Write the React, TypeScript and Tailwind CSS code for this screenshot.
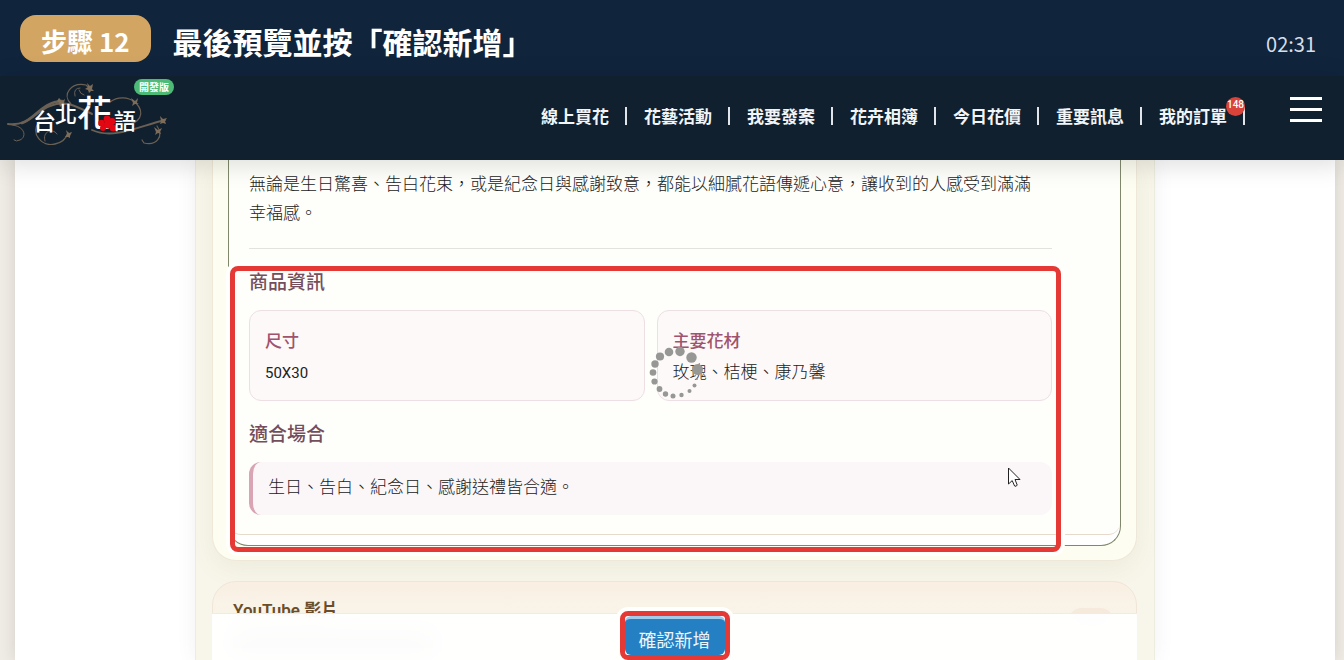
import type { ReactNode } from "react";

const NAV_ITEMS = [
  { label: "線上買花" },
  { label: "花藝活動" },
  { label: "我要發案" },
  { label: "花卉相簿" },
  { label: "今日花價" },
  { label: "重要訊息" },
  { label: "我的訂單", count: 148 },
];

// [cx, cy, r] of each dot, clockwise from the smallest tail
const SPINNER_DOTS = [
  [48, 35, 1],
  [45.5, 41.5, 2],
  [40.5, 47, 2],
  [32.5, 51, 2.2],
  [24, 52, 2.5],
  [16.5, 50, 2.7],
  [10.5, 45, 2.9],
  [5.5, 37.5, 3.1],
  [4, 28.5, 3.3],
  [6, 20, 3.7],
  [11, 12.5, 4.1],
  [20, 8, 4.3],
  [31, 7.5, 4.7],
  [42.5, 13.5, 5.2],
  [48.5, 25.5, 5.5],
];

function Highlight({ className }: { className: string }) {
  return (
    <div
      className={`pointer-events-none absolute z-20 rounded-lg border-5 border-[#e53935] shadow-[0_0_0_4px_#fffffe] ${className}`}
    />
  );
}

function Spinner() {
  return (
    <svg
      className="pointer-events-none absolute top-[77px] left-[400px]"
      width="56"
      height="56"
      viewBox="0 0 56 56"
      fill="#979795"
      aria-hidden="true"
    >
      {SPINNER_DOTS.map(([cx, cy, r]) => (
        <circle key={`${cx}-${cy}`} cx={cx} cy={cy} r={r} />
      ))}
    </svg>
  );
}

function Cursor() {
  return (
    <svg
      className="pointer-events-none absolute top-[200px] right-[31px] z-30"
      width="13"
      height="21"
      viewBox="0 0 13 21"
      aria-hidden="true"
    >
      <path
        d="M0.5 1 V17 L4.2 13.6 L6.6 19 Q8.4 20 9.2 18 L7 12.5 H12 Z"
        fill="#fff"
        stroke="#222"
        strokeWidth="1"
      />
    </svg>
  );
}

function Logo() {
  return (
    <a href="#" className="relative block h-[84px] w-[180px]" aria-label="台北花語">
      <svg width="180" height="84" viewBox="0 0 180 84">
        <g fill="none" stroke="#6b6054" strokeLinecap="round">
          <path d="M8 48 C30 50 34 36 50 30 S76 30 92 38" strokeWidth="2" />
          <path d="M22 47 C36 42 42 26 62 25" strokeWidth="2.6" />
          <path d="M12 49 C25 50 27 61 20 64 Q16 66 14 64" strokeWidth="1" />
          <path d="M39 46 C30 58 42 71 55 68 Q65 66 68 57" strokeWidth="1.3" />
          <path d="M45 65 C42 56 52 51 57 58" strokeWidth="1" />
          <path d="M71 28 C61 18 72 6 86 9 L90 13" strokeWidth="1.2" />
          <path d="M75 20 Q73 12 80 12 M84 19 Q80 18 79 14" strokeWidth="1" />
          <path d="M110 26 C118 20 128 21 135 26" strokeWidth="1.2" />
          <path d="M136 27 C146 38 139 48 126 48" strokeWidth="1.2" />
          <path d="M92 54 C114 64 139 50 165 44" strokeWidth="1.8" />
          <path d="M157 50 C164 60 157 70 144 67 L142 64" strokeWidth="1.2" />
        </g>
        <g fill="#7d6c59">
          <path d="M87 7 L90 10 L93 8 L92 13 L94 15 L91 15 L89 17 L88 14 L85 13 L88 11 Z" />
          <path d="M59 22 L62 25 L65 23 L64 27 L66 29 L62 29 L60 31 L59 27 L57 25 Z" />
          <path d="M131 22 L135 25 L138 22 L137 27 L139 28 L135 28 L132 30 L133 27 Z" />
          <path d="M160 40 L163 43 L167 42 L165 45 L166 48 L163 47 L160 48 L161 45 Z" />
          <path d="M154 51 L158 54 L162 52 L160 56 L161 58 L158 57 L155 59 L156 56 Z" />
          <path d="M66 54 L69 57 L72 56 L70 60 L70 62 L68 61 L65 61 L67 58 Z" />
        </g>
        <g
          fill="#fff"
          fontFamily="'Noto Sans CJK TC', sans-serif"
          fontWeight="500"
          aria-hidden="true"
        >
          <text x="33" y="54" fontSize="23">台</text>
          <text x="55" y="46" fontSize="22">北</text>
          <text x="77" y="50" fontSize="35">花</text>
        </g>
        <g fill="#e30613">
          <circle cx="107" cy="43" r="3.4" />
          <circle cx="101.5" cy="47" r="3.2" />
          <circle cx="103" cy="52" r="3" />
          <circle cx="112" cy="45.5" r="3.4" />
          <circle cx="113" cy="52" r="3.4" />
          <circle cx="108" cy="48.5" r="4" />
        </g>
        <text
          x="114"
          y="53"
          fontSize="22"
          fill="#fff"
          fontFamily="'Noto Sans CJK TC', sans-serif"
          fontWeight="500"
          aria-hidden="true"
        >
          語
        </text>
      </svg>
      <span className="absolute top-[3px] left-[134px] rounded-full bg-[#4bbb77] px-[5px] text-[10px] leading-4 font-bold text-white">
        開發版
      </span>
    </a>
  );
}

function StepBar() {
  return (
    <div className="flex h-[76px] shrink-0 items-center justify-between bg-[#10243c] pr-7 pl-5 text-white">
      <div className="flex items-center gap-[22px]">
        <span className="rounded-2xl bg-[#d3a563] px-[21px] pt-1.5 pb-px text-[26px] leading-10 font-bold">
          步驟 12
        </span>
        <h1 className="pt-1.5 text-[30px] leading-10 font-bold">最後預覽並按「確認新增」</h1>
      </div>
      <span className="pt-3 text-xl text-[#d5dfea]">02:31</span>
    </div>
  );
}

function SiteHeader() {
  return (
    <header className="relative z-40 flex h-[84px] shrink-0 items-start bg-[#11202e] shadow-[0_4px_24px_rgba(0,0,0,0.14)]">
      <Logo />
      <nav className="mt-7 ml-auto flex">
        {NAV_ITEMS.map((item) => (
          <a
            key={item.label}
            href="#"
            className="relative mr-[17px] flex items-center gap-4 text-[17px] leading-6 font-bold text-[#f1f5f8] last:mr-0"
          >
            {item.label}
            <span className="h-[18px] w-0.5 bg-[#e1e5e9]" />
            {item.count && (
              <span className="absolute -top-[7px] right-0 flex size-[19px] justify-center rounded-full bg-[#d9433a] pt-[3px] font-['Roboto',sans-serif] text-[10px] leading-[10px] font-medium text-white">
                {item.count}
              </span>
            )}
          </a>
        ))}
      </nav>
      <button
        type="button"
        aria-label="選單"
        className="mt-[21px] mr-[22px] ml-[45px] flex w-8 flex-col gap-2"
      >
        <span className="h-[3px] bg-white" />
        <span className="h-[3px] bg-white" />
        <span className="h-[3px] bg-white" />
      </button>
    </header>
  );
}

function SectionTitle({ children }: { children: ReactNode }) {
  return <h2 className="mb-[15px] text-[19px] leading-7 font-medium text-[#744e5c]">{children}</h2>;
}

function InfoCard({ label, children }: { label: string; children: ReactNode }) {
  return (
    <div className="flex flex-col gap-[3px] rounded-xl border border-[#eddfe3] bg-[#fdf9f9] p-[15px] text-[17px] leading-7">
      <h3 className="font-medium text-[#a0536c]">{label}</h3>
      <p className="font-light">{children}</p>
    </div>
  );
}

function ProductPreview() {
  return (
    <div className="rounded-b-3xl border border-t-0 border-[#efe8d8] bg-[#fefdf1] px-[15px] pb-3.5 shadow-[0_8px_24px_rgba(120,110,70,0.08)]">
      <div className="rounded-b-[20px] border border-t-0 border-[#80886c] bg-white pb-2.5">
        <div className="rounded-b-xl border-b border-[#e6dacd] bg-[#fefffb] pt-2 pr-[68px] pb-[19px] pl-5 text-[#222]">
          <p className="text-[17px] leading-[29px] font-light">
            無論是生日驚喜、告白花束，或是紀念日與感謝致意，都能以細膩花語傳遞心意，讓收到的人感受到滿滿
            <br />
            幸福感。
          </p>
          <hr className="mt-[22px] mb-[18px] border-[#e4e2df]" />
          <section className="relative">
            <SectionTitle>商品資訊</SectionTitle>
            <div className="mb-[18px] grid grid-cols-2 gap-3">
              <InfoCard label="尺寸">
                <span className="font-['Roboto',sans-serif] text-[15px] leading-none font-normal">
                  50X30
                </span>
              </InfoCard>
              <InfoCard label="主要花材">玫瑰、桔梗、康乃馨</InfoCard>
            </div>
            <SectionTitle>適合場合</SectionTitle>
            <p className="rounded-xl border-l-4 border-[#d9a5b5] bg-[#fbf7f9] pt-[9px] pb-[15px] pl-[15px] text-[17px] leading-[29px] font-light">
              生日、告白、紀念日、感謝送禮皆合適。
            </p>
            <Spinner />
            <Cursor />
            <Highlight className="-top-px -right-[9px] -bottom-[37px] -left-[19px]" />
          </section>
        </div>
      </div>
    </div>
  );
}

function VideoCard() {
  return (
    <div className="mt-5 rounded-t-3xl border border-[#efe6d8] bg-linear-to-b from-[#f9efe3] to-[#faf6ea] to-40% pt-3.5 pr-[22px] pb-10 pl-5">
      <div className="flex items-start justify-between">
        <h2 className="font-['Roboto','Noto_Sans_CJK_TC',sans-serif] text-[17px] leading-7 font-semibold text-[#6a4d2b]">
          YouTube 影片
        </h2>
        <span className="mt-3 h-7 w-[46px] rounded-full bg-[#f5eadb]" />
      </div>
      <div className="h-3 w-[200px] bg-[#8a8a8a]" />
    </div>
  );
}

function ConfirmBar() {
  return (
    <div className="absolute right-[17px] bottom-0 left-4 z-30 flex h-[47px] justify-center border-t border-[#f2ebdf] bg-white/95 pt-0.5 backdrop-blur-md">
      <div className="relative h-[39px]">
        <button
          type="button"
          className="h-full rounded-md border-t-3 border-[#9fcbed] bg-[#247fc3] px-3.5 pt-1 text-lg leading-7 text-[#e9f6fd]"
        >
          確認新增
        </button>
        <Highlight className="-inset-[5px]" />
      </div>
    </div>
  );
}

export default function App() {
  return (
    <div className="flex h-screen flex-col overflow-hidden font-['Noto_Sans_CJK_TC',sans-serif]">
      <StepBar />
      <SiteHeader />
      <main className="min-h-0 flex-1 bg-[#efebe5] pr-[9px] pl-[15px]">
        <div className="h-full bg-white shadow-[0_0_14px_rgba(60,60,40,0.14)]">
          <div className="relative mx-auto h-full max-w-[960px] border-x border-[#eeebdf] bg-[#f8f6ea] pr-[17px] pl-4 shadow-[0_0_18px_rgba(80,80,80,0.08)]">
            <ProductPreview />
            <VideoCard />
            <ConfirmBar />
          </div>
        </div>
      </main>
    </div>
  );
}
